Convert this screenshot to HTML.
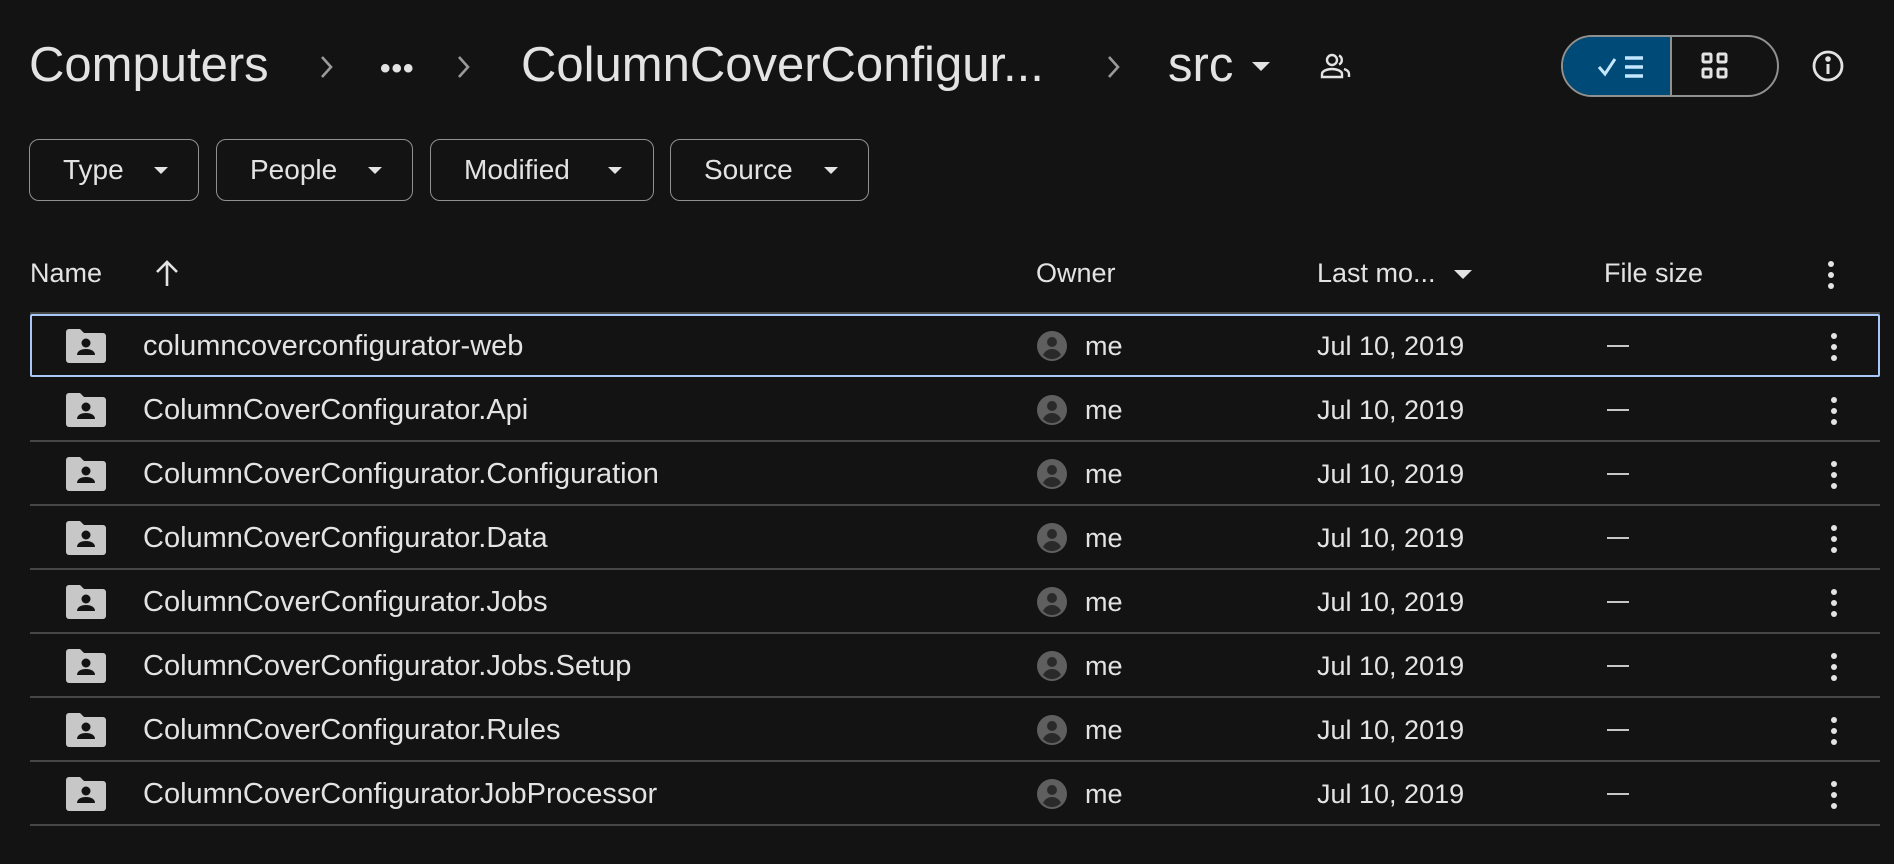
<!DOCTYPE html>
<html><head><meta charset="utf-8"><style>
*{margin:0;padding:0;box-sizing:border-box}
body{width:1894px;height:864px;background:#131313;color:#e3e3e3;font-family:"Liberation Sans",sans-serif;position:relative;overflow:hidden}
.a{position:absolute;white-space:nowrap}
.bc{font-size:49px;top:37px;color:#e3e3e3}
.chip{position:absolute;top:139px;height:62px;border:1.5px solid #8e918f;border-radius:10px;font-size:28px;line-height:59px;padding-left:33px}
.chip i{position:absolute;top:27px;width:0;height:0;border-left:7px solid transparent;border-right:7px solid transparent;border-top:7px solid #e3e3e3}
.hd{top:258px;font-size:27px}
.row{position:absolute;left:30px;width:1850px;height:64px}
.row .t{position:absolute;left:113px;top:16px;font-size:29px}
.row .me{position:absolute;left:1055px;top:17px;font-size:27px}
.row .d{position:absolute;left:1287px;top:17px;font-size:27px}
.row .dash{position:absolute;left:1577px;top:31px;width:22px;height:2px;background:#c4c7c5}
.row .f{position:absolute;left:36px;top:15px}
.row .av{position:absolute;left:1006px;top:16px}
.row .k{position:absolute;left:1799px;top:18px}
.line{position:absolute;left:30px;width:1850px;height:1.5px;background:#444746}
</style></head><body>
<div class="a bc" style="left:29px">Computers</div>
<svg class="a" style="left:319px;top:55px" width="14" height="24" viewBox="0 0 14 24" fill="none" stroke="#9a9a9a" stroke-width="2.6"><path d="M3 2l9 10-9 10"/></svg>
<div class="a" style="left:380px;top:52px;font-size:30px;letter-spacing:1px;font-weight:bold">•••</div>
<svg class="a" style="left:456px;top:55px" width="14" height="24" viewBox="0 0 14 24" fill="none" stroke="#9a9a9a" stroke-width="2.6"><path d="M3 2l9 10-9 10"/></svg>
<div class="a bc" style="left:521px">ColumnCoverConfigur...</div>
<svg class="a" style="left:1106px;top:55px" width="14" height="24" viewBox="0 0 14 24" fill="none" stroke="#9a9a9a" stroke-width="2.6"><path d="M3 2l9 10-9 10"/></svg>
<div class="a bc" style="left:1168px">src</div>
<div class="a" style="left:1252px;top:62px;border-left:9px solid transparent;border-right:9px solid transparent;border-top:9px solid #e3e3e3"></div>
<svg class="a" style="left:1320px;top:52px" width="32" height="28" viewBox="0 0 32 28" fill="none" stroke="#e3e3e3" stroke-width="2.4"><circle cx="12" cy="8" r="5"/><path d="M2 25v-3c0-3 5-5 10-5s10 2 10 5v3z"/><path d="M19 3.5a5 5 0 0 1 0 9M24 17c3 1 5 2.5 5 5v3"/></svg>
<div class="a" style="left:1561px;top:35px;width:218px;height:62px;border:2px solid #8e918f;border-radius:31px;overflow:hidden">
<div style="position:absolute;left:0;top:0;width:109px;height:60px;background:#004a77;border-right:2px solid #8e918f"></div>
<svg style="position:absolute;left:34px;top:17px" width="50" height="26" viewBox="0 0 50 26" fill="none" stroke="#c2e7ff" stroke-width="3"><path d="M2 13l6 7L18 5"/><path d="M28 4h18M28 13h18M28 22h18" stroke-width="3.5"/></svg>
<svg style="position:absolute;left:138px;top:15px" width="28" height="28" viewBox="0 0 28 28" fill="none" stroke="#e3e3e3" stroke-width="3"><rect x="2" y="2" width="8" height="8" rx="1"/><rect x="17" y="2" width="8" height="8" rx="1"/><rect x="2" y="17" width="8" height="8" rx="1"/><rect x="17" y="17" width="8" height="8" rx="1"/></svg>
</div>
<svg class="a" style="left:1811px;top:49px" width="34" height="34" viewBox="0 0 34 34" fill="none" stroke="#e3e3e3" stroke-width="2.8"><circle cx="17" cy="17" r="14"/><path d="M17 15v10" stroke-width="3"/><circle cx="17" cy="10" r="1.4" fill="#e3e3e3"/></svg>

<div class="chip" style="left:29px;width:170px">Type<i style="left:124px"></i></div>
<div class="chip" style="left:216px;width:197px">People<i style="left:151px"></i></div>
<div class="chip" style="left:430px;width:224px">Modified<i style="left:177px"></i></div>
<div class="chip" style="left:670px;width:199px">Source<i style="left:153px"></i></div>

<div class="a hd" style="left:30px">Name</div>
<svg class="a" style="left:155px;top:259px" width="24" height="28" viewBox="0 0 24 28" fill="none" stroke="#e3e3e3" stroke-width="2.6"><path d="M12 27V3M2 13L12 3l10 10"/></svg>
<div class="a hd" style="left:1036px">Owner</div>
<div class="a hd" style="left:1317px">Last mo...</div>
<div class="a" style="left:1454px;top:270px;border-left:9px solid transparent;border-right:9px solid transparent;border-top:9px solid #e3e3e3"></div>
<div class="a hd" style="left:1604px">File size</div>
<svg class="a" style="left:1826px;top:260px" width="10" height="30" viewBox="0 0 10 30" fill="#e3e3e3"><circle cx="5" cy="4" r="3"/><circle cx="5" cy="15" r="3"/><circle cx="5" cy="26" r="3"/></svg>

<div class="line" style="top:312px"></div>
<div class="a" style="left:30px;top:314px;width:1850px;height:63px;border:2px solid #a8c7fa;border-radius:2px"></div>

<div class="row" style="top:314px"><svg class="f" width="40" height="34" viewBox="0 0 40 34"><path d="M0 3a3 3 0 0 1 3-3h11l4 4h19a3 3 0 0 1 3 3v24a3 3 0 0 1-3 3H3a3 3 0 0 1-3-3z" fill="#c7c7c7"/><circle cx="20" cy="14" r="4.5" fill="#131313"/><path d="M11 26c0-4 4-6 9-6s9 2 9 6z" fill="#131313"/></svg><div class="t">columncoverconfigurator-web</div><svg class="av" width="32" height="32" viewBox="0 0 32 32"><circle cx="16" cy="16" r="15" fill="#5f5f5f"/><circle cx="16" cy="12" r="5" fill="#2a2a2a"/><path d="M7 25c2-4 5-6 9-6s7 2 9 6a12 12 0 0 1-18 0z" fill="#2a2a2a"/></svg><div class="me">me</div><div class="d">Jul 10, 2019</div><div class="dash"></div><svg class="k" width="10" height="30" viewBox="0 0 10 30" fill="#e3e3e3"><circle cx="5" cy="4" r="3"/><circle cx="5" cy="15" r="3"/><circle cx="5" cy="26" r="3"/></svg></div>
<div class="line" style="top:440px"></div>
<div class="row" style="top:378px"><svg class="f" width="40" height="34" viewBox="0 0 40 34"><path d="M0 3a3 3 0 0 1 3-3h11l4 4h19a3 3 0 0 1 3 3v24a3 3 0 0 1-3 3H3a3 3 0 0 1-3-3z" fill="#c7c7c7"/><circle cx="20" cy="14" r="4.5" fill="#131313"/><path d="M11 26c0-4 4-6 9-6s9 2 9 6z" fill="#131313"/></svg><div class="t">ColumnCoverConfigurator.Api</div><svg class="av" width="32" height="32" viewBox="0 0 32 32"><circle cx="16" cy="16" r="15" fill="#5f5f5f"/><circle cx="16" cy="12" r="5" fill="#2a2a2a"/><path d="M7 25c2-4 5-6 9-6s7 2 9 6a12 12 0 0 1-18 0z" fill="#2a2a2a"/></svg><div class="me">me</div><div class="d">Jul 10, 2019</div><div class="dash"></div><svg class="k" width="10" height="30" viewBox="0 0 10 30" fill="#e3e3e3"><circle cx="5" cy="4" r="3"/><circle cx="5" cy="15" r="3"/><circle cx="5" cy="26" r="3"/></svg></div>
<div class="line" style="top:504px"></div>
<div class="row" style="top:442px"><svg class="f" width="40" height="34" viewBox="0 0 40 34"><path d="M0 3a3 3 0 0 1 3-3h11l4 4h19a3 3 0 0 1 3 3v24a3 3 0 0 1-3 3H3a3 3 0 0 1-3-3z" fill="#c7c7c7"/><circle cx="20" cy="14" r="4.5" fill="#131313"/><path d="M11 26c0-4 4-6 9-6s9 2 9 6z" fill="#131313"/></svg><div class="t">ColumnCoverConfigurator.Configuration</div><svg class="av" width="32" height="32" viewBox="0 0 32 32"><circle cx="16" cy="16" r="15" fill="#5f5f5f"/><circle cx="16" cy="12" r="5" fill="#2a2a2a"/><path d="M7 25c2-4 5-6 9-6s7 2 9 6a12 12 0 0 1-18 0z" fill="#2a2a2a"/></svg><div class="me">me</div><div class="d">Jul 10, 2019</div><div class="dash"></div><svg class="k" width="10" height="30" viewBox="0 0 10 30" fill="#e3e3e3"><circle cx="5" cy="4" r="3"/><circle cx="5" cy="15" r="3"/><circle cx="5" cy="26" r="3"/></svg></div>
<div class="line" style="top:568px"></div>
<div class="row" style="top:506px"><svg class="f" width="40" height="34" viewBox="0 0 40 34"><path d="M0 3a3 3 0 0 1 3-3h11l4 4h19a3 3 0 0 1 3 3v24a3 3 0 0 1-3 3H3a3 3 0 0 1-3-3z" fill="#c7c7c7"/><circle cx="20" cy="14" r="4.5" fill="#131313"/><path d="M11 26c0-4 4-6 9-6s9 2 9 6z" fill="#131313"/></svg><div class="t">ColumnCoverConfigurator.Data</div><svg class="av" width="32" height="32" viewBox="0 0 32 32"><circle cx="16" cy="16" r="15" fill="#5f5f5f"/><circle cx="16" cy="12" r="5" fill="#2a2a2a"/><path d="M7 25c2-4 5-6 9-6s7 2 9 6a12 12 0 0 1-18 0z" fill="#2a2a2a"/></svg><div class="me">me</div><div class="d">Jul 10, 2019</div><div class="dash"></div><svg class="k" width="10" height="30" viewBox="0 0 10 30" fill="#e3e3e3"><circle cx="5" cy="4" r="3"/><circle cx="5" cy="15" r="3"/><circle cx="5" cy="26" r="3"/></svg></div>
<div class="line" style="top:632px"></div>
<div class="row" style="top:570px"><svg class="f" width="40" height="34" viewBox="0 0 40 34"><path d="M0 3a3 3 0 0 1 3-3h11l4 4h19a3 3 0 0 1 3 3v24a3 3 0 0 1-3 3H3a3 3 0 0 1-3-3z" fill="#c7c7c7"/><circle cx="20" cy="14" r="4.5" fill="#131313"/><path d="M11 26c0-4 4-6 9-6s9 2 9 6z" fill="#131313"/></svg><div class="t">ColumnCoverConfigurator.Jobs</div><svg class="av" width="32" height="32" viewBox="0 0 32 32"><circle cx="16" cy="16" r="15" fill="#5f5f5f"/><circle cx="16" cy="12" r="5" fill="#2a2a2a"/><path d="M7 25c2-4 5-6 9-6s7 2 9 6a12 12 0 0 1-18 0z" fill="#2a2a2a"/></svg><div class="me">me</div><div class="d">Jul 10, 2019</div><div class="dash"></div><svg class="k" width="10" height="30" viewBox="0 0 10 30" fill="#e3e3e3"><circle cx="5" cy="4" r="3"/><circle cx="5" cy="15" r="3"/><circle cx="5" cy="26" r="3"/></svg></div>
<div class="line" style="top:696px"></div>
<div class="row" style="top:634px"><svg class="f" width="40" height="34" viewBox="0 0 40 34"><path d="M0 3a3 3 0 0 1 3-3h11l4 4h19a3 3 0 0 1 3 3v24a3 3 0 0 1-3 3H3a3 3 0 0 1-3-3z" fill="#c7c7c7"/><circle cx="20" cy="14" r="4.5" fill="#131313"/><path d="M11 26c0-4 4-6 9-6s9 2 9 6z" fill="#131313"/></svg><div class="t">ColumnCoverConfigurator.Jobs.Setup</div><svg class="av" width="32" height="32" viewBox="0 0 32 32"><circle cx="16" cy="16" r="15" fill="#5f5f5f"/><circle cx="16" cy="12" r="5" fill="#2a2a2a"/><path d="M7 25c2-4 5-6 9-6s7 2 9 6a12 12 0 0 1-18 0z" fill="#2a2a2a"/></svg><div class="me">me</div><div class="d">Jul 10, 2019</div><div class="dash"></div><svg class="k" width="10" height="30" viewBox="0 0 10 30" fill="#e3e3e3"><circle cx="5" cy="4" r="3"/><circle cx="5" cy="15" r="3"/><circle cx="5" cy="26" r="3"/></svg></div>
<div class="line" style="top:760px"></div>
<div class="row" style="top:698px"><svg class="f" width="40" height="34" viewBox="0 0 40 34"><path d="M0 3a3 3 0 0 1 3-3h11l4 4h19a3 3 0 0 1 3 3v24a3 3 0 0 1-3 3H3a3 3 0 0 1-3-3z" fill="#c7c7c7"/><circle cx="20" cy="14" r="4.5" fill="#131313"/><path d="M11 26c0-4 4-6 9-6s9 2 9 6z" fill="#131313"/></svg><div class="t">ColumnCoverConfigurator.Rules</div><svg class="av" width="32" height="32" viewBox="0 0 32 32"><circle cx="16" cy="16" r="15" fill="#5f5f5f"/><circle cx="16" cy="12" r="5" fill="#2a2a2a"/><path d="M7 25c2-4 5-6 9-6s7 2 9 6a12 12 0 0 1-18 0z" fill="#2a2a2a"/></svg><div class="me">me</div><div class="d">Jul 10, 2019</div><div class="dash"></div><svg class="k" width="10" height="30" viewBox="0 0 10 30" fill="#e3e3e3"><circle cx="5" cy="4" r="3"/><circle cx="5" cy="15" r="3"/><circle cx="5" cy="26" r="3"/></svg></div>
<div class="line" style="top:824px"></div>
<div class="row" style="top:762px"><svg class="f" width="40" height="34" viewBox="0 0 40 34"><path d="M0 3a3 3 0 0 1 3-3h11l4 4h19a3 3 0 0 1 3 3v24a3 3 0 0 1-3 3H3a3 3 0 0 1-3-3z" fill="#c7c7c7"/><circle cx="20" cy="14" r="4.5" fill="#131313"/><path d="M11 26c0-4 4-6 9-6s9 2 9 6z" fill="#131313"/></svg><div class="t">ColumnCoverConfiguratorJobProcessor</div><svg class="av" width="32" height="32" viewBox="0 0 32 32"><circle cx="16" cy="16" r="15" fill="#5f5f5f"/><circle cx="16" cy="12" r="5" fill="#2a2a2a"/><path d="M7 25c2-4 5-6 9-6s7 2 9 6a12 12 0 0 1-18 0z" fill="#2a2a2a"/></svg><div class="me">me</div><div class="d">Jul 10, 2019</div><div class="dash"></div><svg class="k" width="10" height="30" viewBox="0 0 10 30" fill="#e3e3e3"><circle cx="5" cy="4" r="3"/><circle cx="5" cy="15" r="3"/><circle cx="5" cy="26" r="3"/></svg></div>
</body></html>
